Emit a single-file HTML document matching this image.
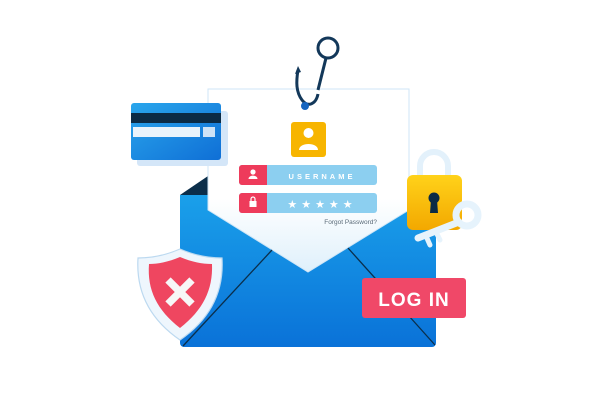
<!DOCTYPE html>
<html><head><style>
html,body{margin:0;padding:0;background:#fff;width:612px;height:408px;overflow:hidden}
svg{display:block}
text{font-family:"Liberation Sans",sans-serif}
</style></head><body>
<svg width="612" height="408" viewBox="0 0 612 408" xmlns="http://www.w3.org/2000/svg">
<defs>
<linearGradient id="env" x1="0" y1="0" x2="0" y2="1"><stop offset="0" stop-color="#1aa0ea"/><stop offset="1" stop-color="#0a72d8"/></linearGradient>
<linearGradient id="let" x1="0" y1="0" x2="0" y2="1"><stop offset="0.6" stop-color="#ffffff"/><stop offset="1" stop-color="#dff0fb"/></linearGradient>
<linearGradient id="card" x1="0" y1="0" x2="1" y2="1"><stop offset="0" stop-color="#2aa6ec"/><stop offset="1" stop-color="#0f6fd6"/></linearGradient>
<linearGradient id="lock" x1="0" y1="0" x2="0" y2="1"><stop offset="0" stop-color="#ffd21a"/><stop offset="1" stop-color="#f3a800"/></linearGradient>
</defs>
<polygon points="180,195 208,176 208,220 180,210" fill="#0b2e4a"/>
<path d="M180 195 H436 V343 A4 4 0 0 1 432 347 H184 A4 4 0 0 1 180 343Z" fill="url(#env)"/>
<polygon points="208,89 409,89 409,210 308,272 208,210" fill="url(#let)" stroke="#cfe6f7" stroke-width="1"/>
<line x1="183" y1="346" x2="272" y2="250" stroke="#0b2e4a" stroke-width="1.3"/>
<line x1="348" y1="248" x2="435" y2="345" stroke="#0b2e4a" stroke-width="1.3"/>
<circle cx="328" cy="48" r="10" fill="none" stroke="#13385a" stroke-width="3"/>
<path d="M326 58 L318 90" stroke="#13385a" stroke-width="3" fill="none"/>
<path d="M298 70 C296 82 296 92 302 100 C308 108 316 104 318 94" stroke="#13385a" stroke-width="3" fill="none"/>
<path d="M298 66 L295 74 L301 72 Z" fill="#13385a"/>
<circle cx="305" cy="106" r="4" fill="#1565c0"/>
<rect x="291" y="122" width="35" height="35" rx="3" fill="#f7b500"/>
<circle cx="308.5" cy="133" r="5" fill="#fff"/>
<path d="M299 150 C299 142 318 142 318 150 Z" fill="#fff"/>
<rect x="239" y="165" width="138" height="20" rx="3" fill="#8ccff0"/>
<path d="M242 165 H267 V185 H242 A3 3 0 0 1 239 182 V168 A3 3 0 0 1 242 165Z" fill="#ee3b5b"/>
<circle cx="253" cy="172" r="2.6" fill="#fff"/><path d="M248.5 179 C248.5 174.5 257.5 174.5 257.5 179Z" fill="#fff"/>
<text x="322" y="179" font-size="7.5" fill="#fff" font-weight="bold" text-anchor="middle" letter-spacing="3">USERNAME</text>
<rect x="239" y="193" width="138" height="20" rx="3" fill="#8ccff0"/>
<path d="M242 193 H267 V213 H242 A3 3 0 0 1 239 210 V196 A3 3 0 0 1 242 193Z" fill="#ee3b5b"/>
<rect x="249.5" y="201" width="7" height="6" fill="#fff"/><path d="M251 201 V199 A2 2 0 0 1 255 199 V201" stroke="#fff" stroke-width="1.2" fill="none"/>
<text x="322" y="208" font-size="11" fill="#fff" text-anchor="middle" letter-spacing="4">★★★★★</text>
<text x="377" y="224" font-size="6.5" fill="#5a6a78" text-anchor="end">Forgot Password?</text>
<rect x="137" y="111" width="91" height="55" rx="3" fill="#d4e6f8"/>
<rect x="131" y="103" width="90" height="57" rx="3" fill="url(#card)"/>
<rect x="131" y="113" width="90" height="10" fill="#0b2b45"/>
<rect x="133" y="127" width="67" height="10" fill="#e9f3fb"/>
<rect x="203" y="127" width="12" height="10" fill="#cfe3f6"/>
<path d="M420 178 V166 A14 14 0 0 1 448 166 V178" stroke="#e3f1fb" stroke-width="6" fill="none"/>
<rect x="407" y="175" width="55" height="55" rx="6" fill="url(#lock)"/>
<circle cx="434" cy="198" r="5.5" fill="#0b2b45"/>
<path d="M431 200 L430 213 H438 L437 200Z" fill="#0b2b45"/>
<circle cx="467" cy="215" r="11" fill="none" stroke="#e6f3fc" stroke-width="7"/>
<path d="M459 222 L418 238" stroke="#e6f3fc" stroke-width="7" stroke-linecap="round"/>
<path d="M426 236 L430 245 M436 232 L440 240" stroke="#e6f3fc" stroke-width="5" stroke-linecap="round"/>
<path d="M180 249 C196 256 210 258 222 258 C224 290 212 318 180 340 C148 318 136 290 138 258 C150 258 164 256 180 249Z" fill="#eef6fd" stroke="#bcd9f0" stroke-width="1.2"/>
<path d="M180 257 C192 262 202 264 212 264 C213 290 203 310 180 328 C157 310 147 290 149 264 C158 264 168 262 180 257Z" fill="#ef4660"/>
<path d="M168 280 L192 304 M192 280 L168 304" stroke="#f7f7f7" stroke-width="7.5"/>
<rect x="362" y="278" width="104" height="40" rx="3" fill="#f04868"/>
<text x="414" y="306" font-size="19" font-weight="bold" fill="#fff" text-anchor="middle" letter-spacing="1">LOG IN</text>
</svg>
</body></html>
